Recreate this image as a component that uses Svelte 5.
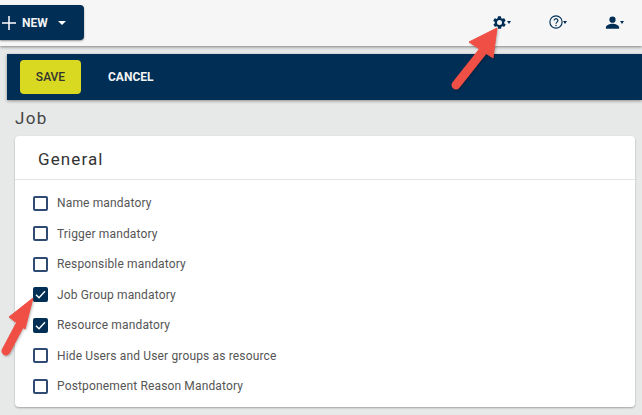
<script lang="ts">
  const options = [
    { label: 'Name mandatory', checked: false },
    { label: 'Trigger mandatory', checked: false },
    { label: 'Responsible mandatory', checked: false },
    { label: 'Job Group mandatory', checked: true },
    { label: 'Resource mandatory', checked: true },
    { label: 'Hide Users and User groups as resource', checked: false },
    { label: 'Postponement Reason Mandatory', checked: false },
  ];
</script>

<div class="page">
  <header class="topbar">
    <button class="new-btn">
      <svg width="14" height="14" viewBox="0 0 14 14"><path d="M7 0v14M0 7h14" stroke="#fff" stroke-width="1.5" fill="none" /></svg>
      <span>NEW</span>
      <i class="caret-lg"></i>
    </button>
    <div class="tools">
      <div class="tool">
        <svg width="15" height="15" viewBox="0 0 24 24"><path fill="#012e55" d="M19.4 13c0-.3.1-.6.1-1s0-.7-.1-1l2.1-1.6c.2-.2.2-.4.1-.6l-2-3.5c-.1-.2-.4-.3-.6-.2l-2.5 1c-.5-.4-1.100-.7-1.700-1l-.4-2.600c0-.2-.2-.4-.5-.4h-4c-.2 0-.4.2-.5.4l-.4 2.700c-.6.2-1.100.6-1.700 1l-2.500-1c-.2-.1-.5 0-.6.2l-2 3.500c-.1.2 0 .4.1.6L4.600 11c0 .3-.1.6-.1 1s0 .7.1 1l-2.100 1.600c-.2.2-.2.4-.1.6l2 3.500c.1.2.4.3.6.2l2.500-1c.5.4 1.100.7 1.700 1l.4 2.600c0 .2.2.4.5.4h4c.2 0 .5-.2.5-.4l.4-2.600c.6-.3 1.200-.6 1.700-1l2.500 1c.2.1.5 0 .6-.2l2-3.500c.1-.2 0-.5-.1-.6L19.400 13zM12 16a4 4 0 1 1 0-8 4 4 0 0 1 0 8z" /></svg>
        <i class="caret"></i>
      </div>
      <div class="tool">
        <svg width="14" height="14" viewBox="0 0 24 24"><circle cx="12" cy="12" r="10.5" fill="none" stroke="#012e55" stroke-width="2" /><path d="M8.800 9.500a3.200 3.200 0 1 1 4.900 2.700c-1 .7-1.700 1.200-1.700 2.600" fill="none" stroke="#012e55" stroke-width="2" /><circle cx="12" cy="18" r="1.300" fill="#012e55" /></svg>
        <i class="caret"></i>
      </div>
      <div class="tool">
        <svg width="15" height="15" viewBox="0 0 24 24"><circle cx="12" cy="7.500" r="5" fill="#012e55" /><path fill="#012e55" d="M1.500 22v-2.500c0-3.500 6.500-5.500 10.500-5.500s10.500 2 10.500 5.500V22z" /></svg>
        <i class="caret"></i>
      </div>
    </div>
  </header>

  <div class="actions">
    <button class="save">SAVE</button>
    <button class="cancel">CANCEL</button>
  </div>

  <h1>Job</h1>

  <section class="card">
    <h2>General</h2>
    <ul>
      {#each options as opt}
        <li>
          <span class="box" class:checked={opt.checked}>
            {#if opt.checked}
              <svg width="15" height="15" viewBox="0 0 15 15"><path d="M3 7.800l3 3 6-6.500" stroke="#fff" stroke-width="1.400" fill="none" /></svg>
            {/if}
          </span>
          <span class="label">{opt.label}</span>
        </li>
      {/each}
    </ul>
  </section>

  <svg class="arrow arrow-gear" width="60" height="72" viewBox="0 0 60 72">
    <path d="M10 61 L37 27" stroke="#ef4f45" stroke-width="9" stroke-linecap="round" fill="none" />
    <path d="M51 4 L23 18 L47 34 Z" fill="#ef4f45" stroke="#ef4f45" stroke-width="1" stroke-linejoin="round" />
  </svg>
  <svg class="arrow arrow-check" width="44" height="72" viewBox="0 0 44 72">
    <path d="M6 62 L23 30" stroke="#ef4f45" stroke-width="9" stroke-linecap="round" fill="none" />
    <path d="M33 9 L9 28 L25 40 Z" fill="#ef4f45" stroke="#ef4f45" stroke-width="1" stroke-linejoin="round" />
  </svg>
</div>

<style>
  :global(body) {
    margin: 0;
    background: #e7e8e8;
  }

  .page {
    position: relative;
    width: 642px;
    height: 415px;
    overflow: hidden;
    font-family: Roboto, "Liberation Sans", sans-serif;
    background: #e7e8e8;
  }

  .topbar {
    height: 46px;
    background: #f6f6f6;
    box-shadow: 0 1px 3px rgba(0, 0, 0, 0.45);
    display: flex;
    align-items: flex-start;
    justify-content: space-between;
    margin-bottom: 8px;
  }

  .new-btn {
    height: 35px;
    width: 84px;
    margin-top: 5px;
    padding: 0 0 0 2px;
    background: #012e55;
    color: #f2f4f6;
    border: 0;
    border-radius: 0 4px 4px 0;
    box-shadow: 0 1px 2px rgba(0, 0, 0, 0.4);
    display: flex;
    align-items: center;
    gap: 6px;
    font: 700 12px Roboto, sans-serif;
  }

  .caret-lg {
    margin-left: 4px;
    border: 4.500px solid transparent;
    border-top-color: #fff;
    border-bottom: 0;
  }

  .tools {
    display: flex;
    align-items: center;
    height: 44px;
    gap: 38px;
    padding-right: 18px;
  }

  .tool {
    display: flex;
    align-items: center;
  }

  .caret {
    border: 2.500px solid transparent;
    border-top: 3px solid #012e55;
    border-bottom: 0;
  }

  .actions {
    margin-left: 7px;
    height: 46px;
    background: #012e55;
    box-shadow: 0 1px 3px rgba(0, 0, 0, 0.4);
    display: flex;
    align-items: center;
    gap: 27px;
    padding-left: 13px;
  }

  .save {
    width: 61px;
    height: 34px;
    background: #d9d922;
    color: #333;
    border: 0;
    border-radius: 4px;
    font: 500 12px Roboto, sans-serif;
  }

  .cancel {
    background: none;
    border: 0;
    padding: 0;
    color: #f2f4f6;
    font: 700 12px Roboto, sans-serif;
  }

  h1 {
    margin: 8px 0 8px 15px;
    font-size: 17px;
    line-height: 20px;
    font-weight: 400;
    letter-spacing: 1.300px;
    color: #444;
  }

  .card {
    margin: 0 7px 0 15px;
    height: 271px;
    background: #fff;
    border-radius: 4px;
    box-shadow: 0 1px 2px rgba(0, 0, 0, 0.3);
  }

  h2 {
    margin: 0;
    padding: 0 23px;
    height: 43px;
    line-height: 47px;
    font-size: 17px;
    font-weight: 400;
    letter-spacing: 1.100px;
    color: #333;
    border-bottom: 1px solid #e2e2e2;
  }

  ul {
    list-style: none;
    margin: 0;
    padding: 8px 0 0 18px;
  }

  li {
    height: 30.500px;
    display: flex;
    align-items: center;
    gap: 9px;
  }

  .box {
    box-sizing: border-box;
    width: 15px;
    height: 15px;
    border: 2px solid #2f4b73;
    border-radius: 2px;
    display: flex;
    align-items: center;
    justify-content: center;
  }

  .box.checked {
    background: #012e55;
    border-color: #012e55;
  }

  .box svg {
    flex: none;
  }

  .label {
    font-size: 12px;
    color: #555;
    letter-spacing: 0.15px;
  }

  .arrow {
    position: absolute;
    pointer-events: none;
    filter: drop-shadow(1px 1px 1px rgba(0, 0, 0, 0.25));
  }

  .arrow-gear {
    left: 446px;
    top: 24px;
  }

  .arrow-check {
    left: 0;
    top: 289px;
  }
</style>
